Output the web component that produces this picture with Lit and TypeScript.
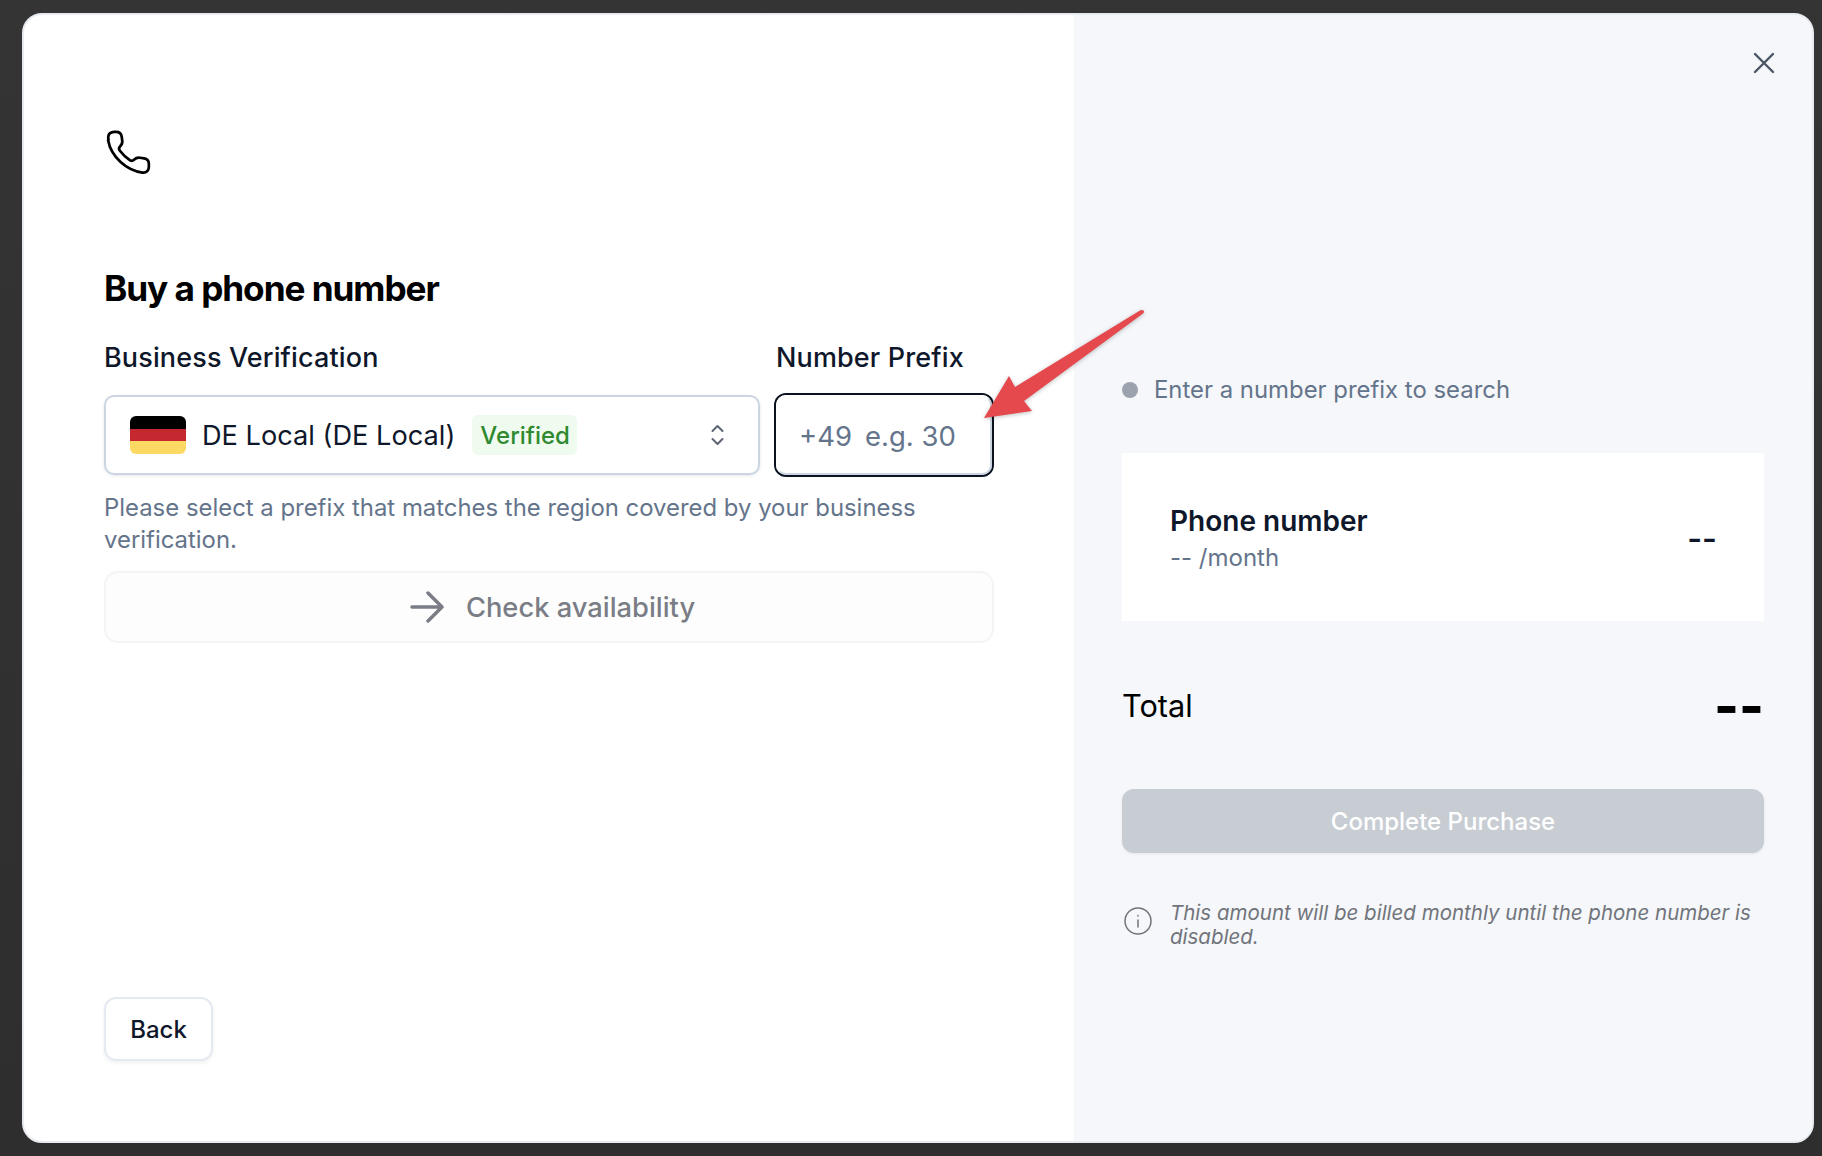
import { LitElement, css, html } from 'lit';
import { customElement } from 'lit/decorators.js';

@customElement('app-root')
export class AppRoot extends LitElement {
  static styles = css`
    :host {
      display: block;
      position: relative;
      height: 1156px;
      box-sizing: border-box;
      padding: 13px 8px 13px 22px;
      background: linear-gradient(#343434, #2e2e2e);
      font-family: Inter, "Liberation Sans", sans-serif;
      color: #0f172a;
    }
    * { box-sizing: border-box; }

    .modal {
      position: relative;
      display: flex;
      height: 100%;
      border: 2px solid #e7ebf0;
      border-radius: 20px;
      overflow: hidden;
      background: #fff;
    }

    /* left column */
    .left {
      width: 1050px;
      flex: none;
      display: flex;
      flex-direction: column;
      padding: 115px 80px 80px 80px;
    }
    .phone { display: block; width: 52px; height: 52px; margin-left: 1px; color: #000; }
    h1 {
      margin: 86px 0 0;
      font-size: 35.200px;
      line-height: 40px;
      font-weight: 650;
      letter-spacing: -0.03em;
      color: #000;
    }
    .fields {
      margin-top: 34px;
      display: grid;
      grid-template-columns: 656px 1fr;
      column-gap: 16px;
      row-gap: 21px;
    }
    .label { font-size: 27px; line-height: 32px; font-weight: 500; letter-spacing: 0.005em; }
    .select {
      height: 80px;
      display: flex;
      align-items: center;
      padding: 0 33px 0 24px;
      border: 2px solid #cbd5e1;
      border-radius: 10px;
      box-shadow: 0 1px 3px rgba(15, 23, 42, 0.1);
      font-size: 27.200px;
    }
    .flag {
      width: 56px;
      height: 38px;
      flex: none;
      border-radius: 6px;
      overflow: hidden;
      background: linear-gradient(#000 34%, #c5282f 34%, #c5282f 67%, #fbd962 67%);
      margin-right: 16px;
    }
    .badge {
      margin-left: 17px;
      padding: 0 7px 0 8px;
      height: 40px;
      display: flex;
      align-items: center;
      border-radius: 6px;
      background: #effbef;
      color: #2f8a2f;
      font-size: 24px;
      font-weight: 500;
    }
    .chev { margin-left: auto; width: 15px; height: 22px; color: #5b6472; }
    .prefix {
      height: 80px;
      margin-right: 2px;
      display: flex;
      align-items: center;
      gap: 13px;
      padding-left: 21px;
      padding-top: 2px;
      border: 2px solid;
      border-color: #fff #cbd5e1 #cbd5e1 #fff;
      border-radius: 10px;
      box-shadow: 0 0 0 2px #0b1220;
      font-size: 27.500px;
      color: #64748b;
    }
    .prefix input {
      width: 120px;
      border: 0;
      outline: 0;
      padding: 0;
      background: none;
      font: inherit;
    }
    .prefix input::placeholder { color: #64748b; opacity: 1; }
    .help {
      margin: 17px 0 0;
      font-size: 23.900px;
      line-height: 32px;
      color: #64748b;
    }
    .check {
      margin-top: 15px;
      height: 72px;
      display: flex;
      align-items: center;
      justify-content: center;
      gap: 22px;
      padding: 0 0 0 7px;
      border: 2px solid #f3f4f6;
      border-radius: 14px;
      background: #fdfdfd;
      color: #7a7d85;
      font: 500 27.300px Inter, sans-serif;
    }
    .check svg { width: 34px; height: 32px; }
    .back {
      margin-top: auto;
      width: 109px;
      height: 64px;
      border: 2px solid #e5e9f1;
      border-radius: 12px;
      background: #fff;
      box-shadow: 0 2px 4px rgba(15, 23, 42, 0.06);
      color: #0f172a;
      font: 500 24px Inter, sans-serif;
    }

    /* right column */
    .right {
      flex: 1;
      padding: 359px 48px 0;
      background: #f5f7fa;
    }
    .status {
      display: flex;
      align-items: center;
      gap: 16px;
      font-size: 23.900px;
      line-height: 32px;
      color: #64748b;
    }
    .dot { width: 16px; height: 16px; border-radius: 50%; background: #9ca3af; }
    .card {
      margin-top: 47px;
      height: 168px;
      padding: 3px 47px 0 48px;
      display: flex;
      align-items: center;
      justify-content: space-between;
      background: #fff;
    }
    .card b { display: block; font-size: 28px; line-height: 38px; font-weight: 600; }
    .card span { display: block; font-size: 24px; line-height: 36px; color: #64748b; }
    .card .price { font-size: 32px; font-weight: 600; color: #0f172a; }
    .total {
      margin-top: 65px;
      display: flex;
      align-items: center;
      justify-content: space-between;
      font-size: 30.700px;
      line-height: 40px;
      color: #000;
    }
    .total strong { font-size: 53px; font-weight: 800; }
    .buy {
      margin-top: 63px;
      width: 100%;
      height: 64px;
      border: 0;
      border-radius: 12px;
      background: #c8cdd3;
      box-shadow: 0 1px 3px rgba(15, 23, 42, 0.08);
      color: #fff;
      font: 500 24px Inter, sans-serif;
    }
    .note {
      margin-top: 48px;
      display: flex;
      align-items: flex-start;
      gap: 17px;
      font-size: 20.500px;
      line-height: 24px;
      font-style: italic;
      color: #71747b;
    }
    .note svg { width: 30px; height: 30px; flex: none; margin: 5px 0 0 1px; }

    /* overlays */
    .close {
      position: absolute;
      top: 37px;
      right: 37px;
      width: 22px;
      height: 22px;
      padding: 0;
      border: 0;
      background: none;
      color: #4b5563;
    }
    .annotation {
      position: absolute;
      left: 980px;
      top: 305px;
      width: 170px;
      height: 120px;
      filter: drop-shadow(0 1px 2px rgba(0, 0, 0, 0.25));
    }
  `;

  render() {
    return html`
      <div class="modal">
        <section class="left">
          <svg class="phone" viewBox="0 0 44 44" fill="none" stroke="currentColor" stroke-width="2.300" stroke-linejoin="round" stroke-linecap="round">
            <path d="M3 8.500C2 4 4 1.500 8 1.500h1.500c2.600 0 4.200 1.400 4.600 4l.5 3.600c.3 2-.5 3.600-2 5-1 1-.8 2.300 0 3.400 2.500 3.300 5 5.600 8.400 8 1.200.800 2.500.700 3.500-.3 1.400-1.300 3-2 5-1.700l3.600.5c2.600.400 4 2 4 4.600v2.400c0 3.300-2 5.500-5.500 5-13-1.500-26.500-13-29-27.500Z"/>
          </svg>
          <h1>Buy a phone number</h1>
          <div class="fields">
            <div class="label">Business Verification</div>
            <div class="label">Number Prefix</div>
            <div class="select">
              <div class="flag"></div>
              <span>DE Local (DE Local)</span>
              <span class="badge">Verified</span>
              <svg class="chev" viewBox="0 0 15 22" fill="none" stroke="currentColor" stroke-width="2" stroke-linecap="round" stroke-linejoin="round">
                <path d="M2.500 7 7.500 2l5 5M2.500 15l5 5 5-5"/>
              </svg>
            </div>
            <label class="prefix">
              <span>+49</span>
              <input placeholder="e.g. 30" />
            </label>
          </div>
          <p class="help">Please select a prefix that matches the region covered by your business verification.</p>
          <button class="check">
            <svg viewBox="0 0 34 32" fill="none" stroke="currentColor" stroke-width="3.500" stroke-linecap="round" stroke-linejoin="round">
              <path d="M2 16h30M18 2l14 14-14 14"/>
            </svg>
            Check availability
          </button>
          <button class="back">Back</button>
        </section>
        <section class="right">
          <div class="status"><span class="dot"></span>Enter a number prefix to search</div>
          <div class="card">
            <div>
              <b>Phone number</b>
              <span>-- /month</span>
            </div>
            <div class="price">--</div>
          </div>
          <div class="total"><span>Total</span><strong>--</strong></div>
          <button class="buy">Complete Purchase</button>
          <div class="note">
            <svg viewBox="0 0 30 30" fill="none" stroke="#71747b" stroke-width="1.500" stroke-linecap="round">
              <circle cx="15" cy="15" r="13"/>
              <path d="M15 14v7M15 9.500v.5"/>
            </svg>
            <span>This amount will be billed monthly until the phone number is disabled.</span>
          </div>
        </section>
        <button class="close" aria-label="Close">
          <svg viewBox="0 0 22 22" fill="none" stroke="currentColor" stroke-width="2.400" stroke-linecap="round">
            <path d="M2 2l18 18M20 2 2 20"/>
          </svg>
        </button>
      </div>
      <svg class="annotation" viewBox="0 0 170 120">
        <path fill="#e5484d" d="M4 113 29 71 35 82 160 5.500C163 3.800 165.500 6.500 163 8.500L44 96 52 106Z"/>
      </svg>
    `;
  }
}
